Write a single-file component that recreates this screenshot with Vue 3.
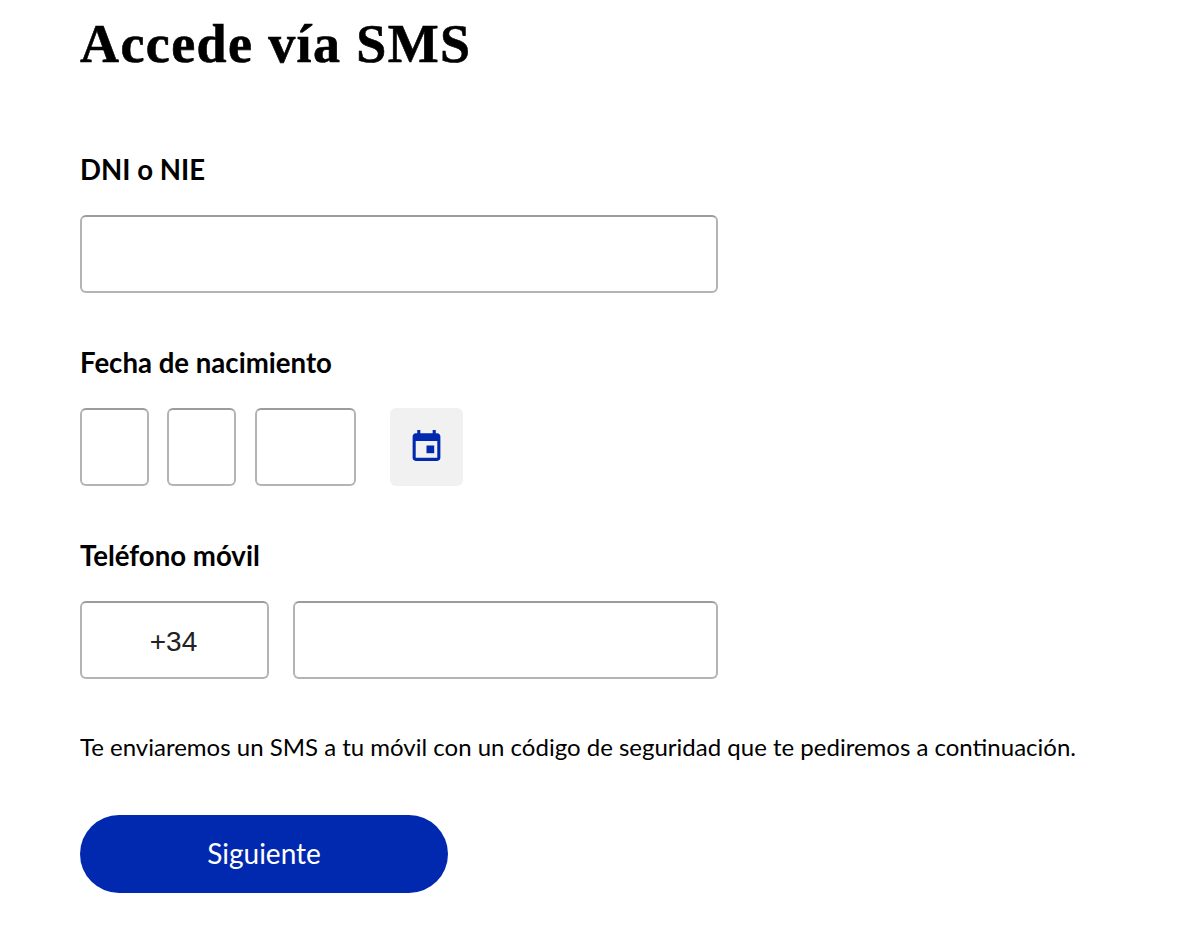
<script setup>
import { ref } from "vue";

const dni = ref("");
const day = ref("");
const month = ref("");
const year = ref("");
const prefix = ref("+34");
const phone = ref("");
</script>

<template>
  <main class="page">
    <h1>Accede vía SMS</h1>

    <form class="form" @submit.prevent>
      <div class="field">
        <label for="dni">DNI o NIE</label>
        <input id="dni" v-model="dni" type="text" class="box wide" />
      </div>

      <div class="field">
        <label for="day">Fecha de nacimiento</label>
        <div class="date-row">
          <input id="day" v-model="day" type="text" class="box day" />
          <input v-model="month" type="text" class="box day" />
          <input v-model="year" type="text" class="box year" />
          <button type="button" class="cal" aria-label="Calendario">
            <svg width="37" height="37" viewBox="0 0 24 24" fill="#0129af">
              <path d="M19 4h-1V2h-2v2H8V2H6v2H5c-1.100 0-2 .9-2 2v14c0 1.100.9 2 2 2h14c1.100 0 2-.9 2-2V6c0-1.100-.9-2-2-2zm0 16H5V9h14v11z" />
              <rect x="12" y="12" width="5" height="5" />
            </svg>
          </button>
        </div>
      </div>

      <div class="field">
        <label for="phone">Teléfono móvil</label>
        <div class="phone-row">
          <input v-model="prefix" type="text" class="box prefix" />
          <input id="phone" v-model="phone" type="tel" class="box number" />
        </div>
      </div>

      <p class="hint">Te enviaremos un SMS a tu móvil con un código de seguridad que te pediremos a continuación.</p>

      <button type="submit" class="next">Siguiente</button>
    </form>
  </main>
</template>

<style>
body {
  background: #fff;
}
</style>

<style scoped>
.page {
  padding: 14px 0 49px 80px;
  font-family: Lato, "Noto Sans", sans-serif;
  color: #000;
}

h1 {
  margin: 0;
  font-family: "Liberation Serif", "DejaVu Serif", serif;
  font-size: 54px;
  line-height: 60px;
  font-weight: 700;
  letter-spacing: 1.4px;
  -webkit-text-stroke: 0.6px #000;
}

.form {
  margin-top: 81px;
}

.field {
  margin-bottom: 55px;
}

label {
  display: block;
  font-size: 27.6px;
  line-height: 30px;
  font-weight: 700;
  margin-bottom: 30px;
}

.box {
  display: block;
  box-sizing: border-box;
  height: 78px;
  padding: 3px 18px 0 16px;
  border: 2px solid #b4b4b4;
  border-top-color: #9c9c9c;
  border-radius: 6px;
  background: #fff;
  font-family: "Liberation Sans", Arial, sans-serif;
  font-size: 28px;
  color: #222;
  outline: none;
}

.wide {
  width: 638px;
}

.date-row,
.phone-row {
  display: flex;
}

.date-row {
  gap: 18.4px;
}

.day {
  width: 69px;
}

.year {
  width: 101px;
}

.cal {
  display: flex;
  align-items: center;
  justify-content: center;
  width: 73.3px;
  height: 78px;
  margin-left: 15.8px;
  padding: 0 0 4px;
  border: none;
  border-radius: 6px;
  background: #f1f1f1;
}

.phone-row {
  gap: 24px;
}

.prefix {
  width: 189px;
  text-align: center;
}

.number {
  width: 425px;
}

.hint {
  margin: -2px 0 53px;
  font-size: 24px;
  line-height: 30px;
}

.next {
  display: block;
  width: 368px;
  height: 78px;
  padding: 0 0 2px;
  border: none;
  border-radius: 39px;
  background: #0129af;
  color: #fff;
  font-family: Lato, "Noto Sans", sans-serif;
  font-size: 28px;
}
</style>
